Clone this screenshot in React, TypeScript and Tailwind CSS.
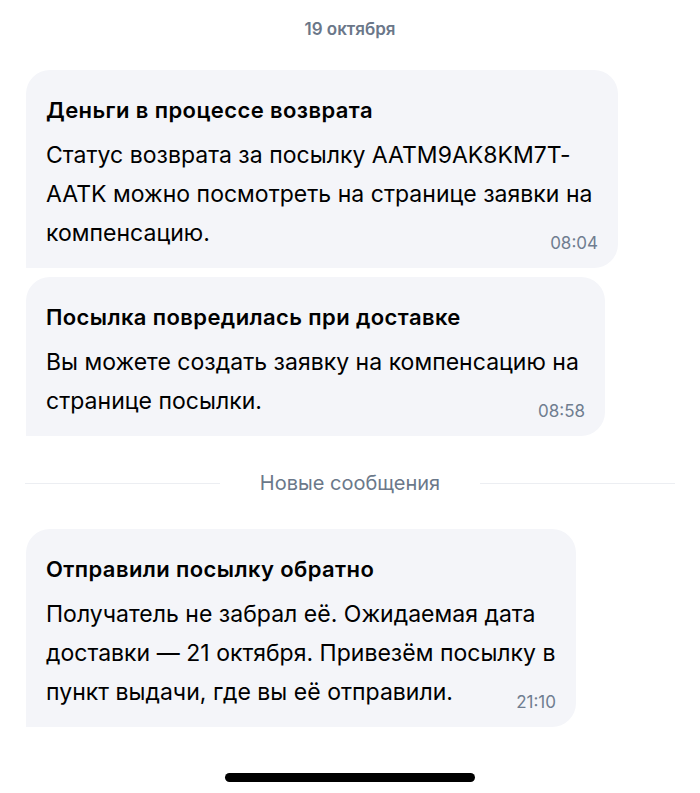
import React from "react";

const font = { fontFamily: "Inter, 'Noto Sans', sans-serif" };

function Bubble({
  width,
  title,
  lines,
  time,
}: {
  width: string;
  title: string;
  lines: string[];
  time: string;
}) {
  const last = lines[lines.length - 1];
  const rest = lines.slice(0, -1);
  return (
    <div
      className={`${width} bg-[#f4f5f9] rounded-tl-[24px] rounded-tr-[24px] rounded-br-[24px] rounded-bl-none pl-[20px] pr-[20px] pt-[26px] pb-[15px]`}
    >
      <div className="text-[22px] leading-[28px] font-semibold tracking-[0.4px] text-black whitespace-nowrap mb-[12px]">
        {title}
      </div>
      {rest.map((l, i) => (
        <div key={i} className="text-[23px] leading-[39px] tracking-[0.02px] text-black whitespace-nowrap">
          {l}
        </div>
      ))}
      <div className="flex items-end justify-between">
        <span className="text-[23px] leading-[39px] tracking-[0.02px] text-black whitespace-nowrap">{last}</span>
        <span className="text-[17px] leading-[20px] text-[#6f7d90]">{time}</span>
      </div>
    </div>
  );
}

export default function App() {
  return (
    <div className="w-[700px] h-[793px] bg-white overflow-hidden flex flex-col" style={font}>
      <div className="pt-[19px] text-center text-[17px] leading-[20px] font-semibold text-[#6b7789]">
        19 октября
      </div>
      <div className="px-[26px] mt-[31px] flex flex-col gap-[9px]">
        <Bubble
          width="w-[592px]"
          title="Деньги в процессе возврата"
          lines={[
            "Статус возврата за посылку AATM9AK8KM7T-",
            "AATK можно посмотреть на странице заявки на",
            "компенсацию.",
          ]}
          time="08:04"
        />
        <Bubble
          width="w-[579px]"
          title="Посылка повредилась при доставке"
          lines={["Вы можете создать заявку на компенсацию на", "странице посылки."]}
          time="08:58"
        />
      </div>
      <div className="mt-[37px] mb-[36px] px-[25px] flex items-center">
        <div className="w-[195px] h-px bg-[#eceef2]" />
        <div className="flex-1 text-center text-[20px] leading-[20px] text-[#6b788a]">Новые сообщения</div>
        <div className="w-[195px] h-px bg-[#eceef2]" />
      </div>
      <div className="px-[26px]">
        <Bubble
          width="w-[550px]"
          title="Отправили посылку обратно"
          lines={[
            "Получатель не забрал её. Ожидаемая дата",
            "доставки — 21 октября. Привезём посылку в",
            "пункт выдачи, где вы её отправили.",
          ]}
          time="21:10"
        />
      </div>
      <div className="mt-[46px] flex justify-center">
        <div className="w-[250px] h-[9px] rounded-full bg-black" />
      </div>
    </div>
  );
}
